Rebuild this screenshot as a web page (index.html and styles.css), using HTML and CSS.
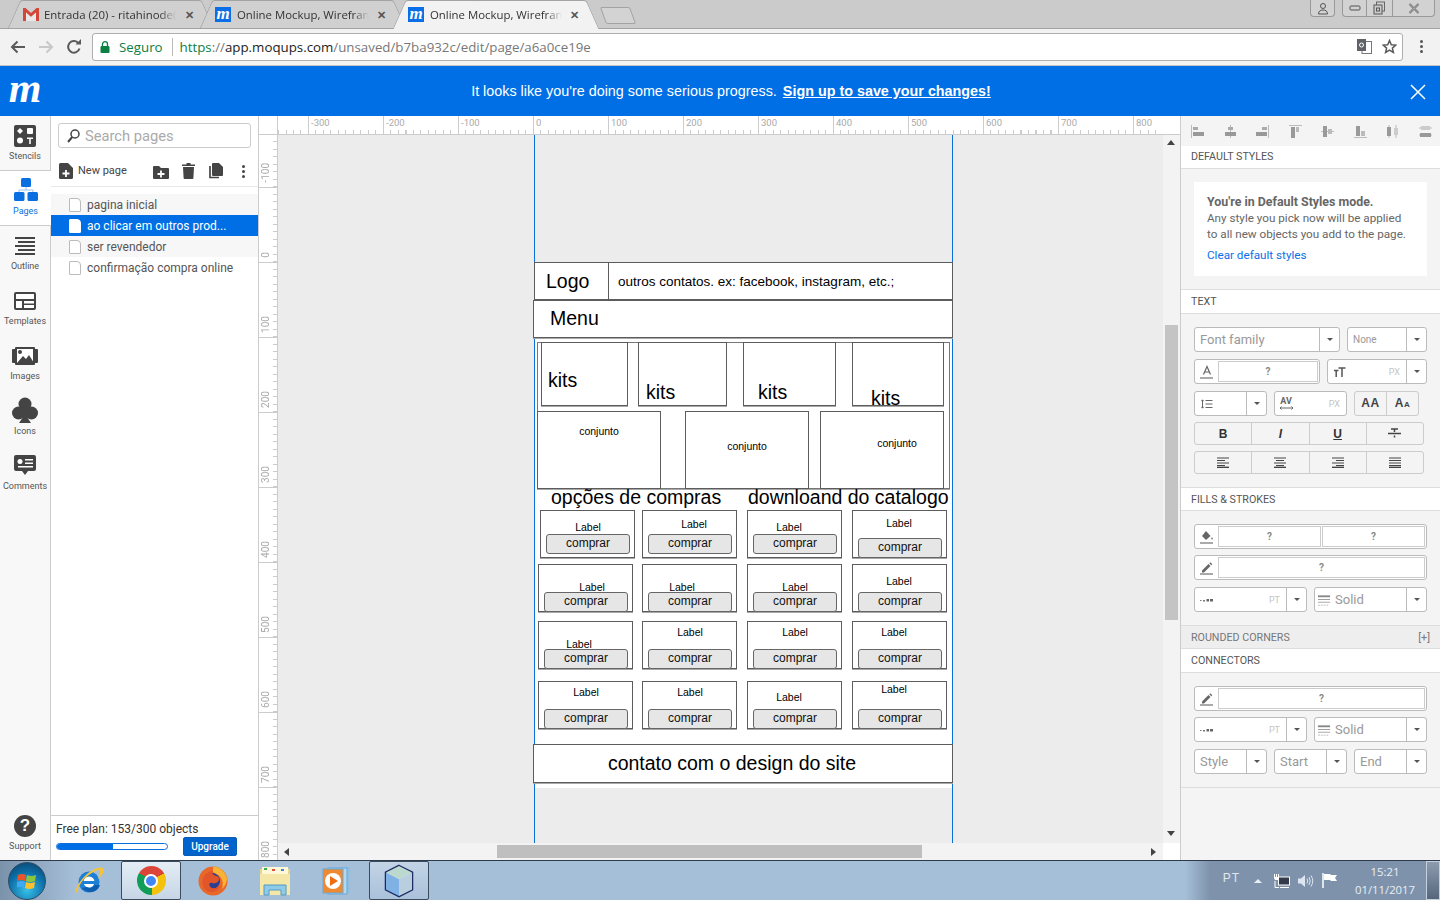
FILE: index.html
```html
<!DOCTYPE html>
<html lang="en">
<head>
    <meta charset="UTF-8">
    <title>Online Mockup, Wireframe - Moqups</title>
    <link rel="stylesheet" href="styles.css">
</head>
<body>
<svg class="defs" width="0" height="0">
    <symbol id="i-pen" viewBox="0 0 14 14"><path d="M2 9.500 8.500 3l2 2L4 11.500H2z" fill="#666"/><path d="M9.300 2.200l1-1 2 2-1 1z" fill="#666"/></symbol>
    <symbol id="i-dots" viewBox="0 0 14 6"><rect x="0" y="3" width="1.500" height="1" fill="#777"/><rect x="3" y="3" width="2" height="1.500" fill="#777"/><rect x="6.500" y="2" width="2.500" height="2.500" fill="#666"/><rect x="10" y="2" width="3" height="2.500" fill="#666"/></symbol>
    <symbol id="i-solid" viewBox="0 0 14 12"><path d="M0 1h13v2H0z" fill="#888"/><path d="M0 5h13v1H0z" fill="#999"/><path d="M0 8h13v1H0zM0 11h2v1H0zM3 11h2v1H3zM6 11h2v1H6zM9 11h2v1H9z" fill="#aaa"/></symbol>
</svg>

<div class="tabstrip">
    <div class="tab tab-first">
        <svg class="favicon" viewBox="0 0 16 14"><path d="M0 1h2.500L8 6l5.500-5H16v13h-3V5.500L8 10 3 5.500V14H0z" fill="#d44638"/><path d="M3 5.500 8 10l5-4.500V14H3z" fill="#e8e8e8"/></svg>
        <span class="tab-title">Entrada (20) - ritahinode(</span>
        <span class="tab-x">&#10005;</span>
    </div>
    <div class="tab">
        <span class="moq-fav">m</span>
        <span class="tab-title">Online Mockup, Wirefran</span>
        <span class="tab-x">&#10005;</span>
    </div>
    <div class="tab tab-active">
        <span class="moq-fav">m</span>
        <span class="tab-title">Online Mockup, Wirefran</span>
        <span class="tab-x">&#10005;</span>
    </div>
    <div class="tab-new"></div>
    <div class="win-btns">
        <div class="win-group win-user">
            <svg width="12" height="13" viewBox="0 0 12 13"><circle cx="6" cy="4" r="2.500" fill="none" stroke="#555"/><path d="M1.500 12c0-3 2-4 4.500-4s4.500 1 4.500 4z" fill="none" stroke="#555"/></svg>
        </div>
        <div class="win-group">
            <div class="win-cell w-min"><svg width="12" height="8" viewBox="0 0 12 8"><rect x="1" y="2" width="10" height="4" fill="none" stroke="#555" rx="1"/></svg></div>
            <div class="win-cell w-max"><svg width="13" height="14" viewBox="0 0 13 14"><rect x="3.500" y="1" width="8" height="9" fill="none" stroke="#666"/><rect x="1" y="4" width="8" height="9" fill="#ccc" stroke="#555"/><rect x="3.500" y="7" width="3" height="3" fill="none" stroke="#555"/></svg></div>
            <div class="win-cell w-close"><svg width="12" height="11" viewBox="0 0 12 11"><path d="M1.500 1 10.500 10M10.500 1 1.500 10" stroke="#666" stroke-width="2" fill="none"/><path d="M1.500 1 10.500 10M10.500 1 1.500 10" stroke="#ddd" stroke-width=".7" fill="none"/></svg></div>
        </div>
    </div>
</div>

<div class="toolbar">
    <svg class="nav-ico" width="16" height="14" viewBox="0 0 16 14"><path d="M15 7H2.500M7.500 1.500 2 7l5.500 5.500" fill="none" stroke="#5a5a5a" stroke-width="2"/></svg>
    <svg class="nav-ico" width="16" height="14" viewBox="0 0 16 14"><path d="M1 7h12.500M8.500 1.500 14 7l-5.500 5.500" fill="none" stroke="#c8c8c8" stroke-width="2"/></svg>
    <svg class="nav-ico" width="16" height="16" viewBox="0 0 16 16"><path d="M13.500 9.500A5.800 5.800 0 1 1 12 3.700" fill="none" stroke="#5a5a5a" stroke-width="2"/><path d="M9.500 5.500h5.500V0z" fill="#5a5a5a"/></svg>
    <div class="omnibox">
        <svg class="lock" width="10" height="12" viewBox="0 0 10 12"><rect x="0.500" y="5" width="9" height="7" rx="1" fill="#0b8043"/><path d="M2.500 5V3.200a2.500 2.500 0 0 1 5 0V5" fill="none" stroke="#0b8043" stroke-width="1.300"/></svg>
        <span class="secure">Seguro</span>
        <span class="url"><span class="u-green">https</span><span class="u-grey">://</span>app.moqups.com<span class="u-grey">/unsaved/b7ba932c/edit/page/a6a0ce19e</span></span>
        <svg class="omni-ico" width="15" height="15" viewBox="0 0 15 15"><rect x="5" y="2.500" width="9.500" height="12" fill="#fff" stroke="#777"/><rect x="0" y="0" width="9" height="12" fill="#5f6368"/><circle cx="4.500" cy="6" r="2" fill="none" stroke="#fff"/></svg>
        <svg class="omni-ico star" width="15" height="15" viewBox="0 0 15 15"><path d="M7.500 1.500 9.300 5.700l4.500.4-3.400 3 1 4.400-3.900-2.300-3.900 2.300 1-4.400-3.400-3 4.500-.4z" fill="none" stroke="#5a5a5a" stroke-width="1.500"/></svg>
    </div>
    <div class="kebab kebab-chrome"><i></i><i></i><i></i></div>
</div>

<div class="banner">
    <span class="logo">m</span>
    <p class="banner-msg">It looks like you're doing some serious progress. <a href="#">Sign up to save your changes!</a></p>
    <svg class="banner-x" width="16" height="16" viewBox="0 0 16 16"><path d="M1 1l14 14M15 1 1 15" stroke="#fff" stroke-width="1.500"/></svg>
</div>

<div class="app">
    <nav class="rail">
        <div class="rail-item rail-stencils">
            <svg width="22" height="22" viewBox="0 0 22 22"><rect width="22" height="22" rx="2" fill="#444"/><path d="M6 3l3 3-3 3-3-3z" fill="#fff"/><rect x="13" y="3" width="6" height="6" rx="1" fill="#fff"/><circle cx="6" cy="15.500" r="3" fill="#fff"/><path d="M13 12.500h6v1.500h-2.200v5h-1.600v-5H13z" fill="#fff"/></svg>
            <span>Stencils</span>
        </div>
        <div class="rail-item rail-active">
            <svg width="24" height="24" viewBox="0 0 24 24"><rect x="7" y="0" width="10" height="9" rx="1.500" fill="#0a6fe0"/><path d="M12 9v3M5 14v-2h14v2" fill="none" stroke="#9cc3ee"/><rect x="0" y="14" width="10.500" height="9" rx="1.500" fill="#0a6fe0"/><rect x="13.500" y="14" width="10.500" height="9" rx="1.500" fill="#0a6fe0"/></svg>
            <span>Pages</span>
        </div>
        <div class="rail-item item-short">
            <svg width="22" height="18" viewBox="0 0 22 18"><path d="M1 1h20M4 5h17M1 9h20M4 13h17M1 17h20" stroke="#444" stroke-width="2"/></svg>
            <span>Outline</span>
        </div>
        <div class="rail-item item-short">
            <svg width="22" height="18" viewBox="0 0 22 18"><rect width="22" height="18" rx="2" fill="#444"/><rect x="2" y="2" width="18" height="5" fill="#fff"/><rect x="2" y="9" width="6" height="7" fill="#fff"/><rect x="10" y="9" width="10" height="2.500" fill="#fff"/><rect x="10" y="13" width="10" height="3" fill="#fff"/></svg>
            <span>Templates</span>
        </div>
        <div class="rail-item item-short">
            <svg width="26" height="18" viewBox="0 0 26 18"><rect x="0" y="2" width="26" height="14" rx="1" fill="#444"/><rect x="3" y="0" width="20" height="18" rx="1" fill="#444"/><path d="M5 2h16v14H5z" fill="#fff"/><circle cx="8" cy="5" r="2" fill="#444"/><path d="M5 16l6-7 3 3 3-4 5 8z" fill="#444"/></svg>
            <span>Images</span>
        </div>
        <div class="rail-item item-tall">
            <svg width="26" height="26" viewBox="0 0 26 26"><circle cx="13" cy="7" r="6.500" fill="#444"/><circle cx="6.500" cy="16" r="6.500" fill="#444"/><circle cx="19.500" cy="16" r="6.500" fill="#444"/><path d="M11.500 10h3l.5 10 4 6H7l4-6z" fill="#444"/></svg>
            <span>Icons</span>
        </div>
        <div class="rail-item item-short">
            <svg width="22" height="20" viewBox="0 0 22 20"><path d="M2 0h18a2 2 0 0 1 2 2v12a2 2 0 0 1-2 2h-6l-3 4-3-4H2a2 2 0 0 1-2-2V2a2 2 0 0 1 2-2z" fill="#444"/><circle cx="6" cy="6.500" r="2.500" fill="#fff"/><path d="M11 4h8v1.500h-8zM11 7.500h8V9h-8zM4 11h15v1.500H4z" fill="#fff"/></svg>
            <span>Comments</span>
        </div>
        <div class="rail-item rail-support">
            <div class="help-dot">?</div>
            <span>Support</span>
        </div>
    </nav>

    <aside class="pages">
        <div class="search">
            <svg width="13" height="14" viewBox="0 0 13 14"><circle cx="8" cy="5" r="4" fill="none" stroke="#444" stroke-width="1.500"/><path d="M5.200 8 1 13" stroke="#444" stroke-width="2"/></svg>
            <span>Search pages</span>
        </div>
        <div class="pages-tools">
            <svg width="14" height="16" viewBox="0 0 14 16"><path d="M1.500 0H9l5 5v9.500a1.500 1.500 0 0 1-1.500 1.500h-11A1.500 1.500 0 0 1 0 14.500v-13A1.500 1.500 0 0 1 1.500 0z" fill="#444"/><path d="M3.500 10.500h7M7 7v7" stroke="#fff" stroke-width="1.800"/></svg>
            <span class="new-page">New page</span>
            <svg class="t-folder" width="16" height="13" viewBox="0 0 16 13"><path d="M0 1a1 1 0 0 1 1-1h5l2 2h7a1 1 0 0 1 1 1v9a1 1 0 0 1-1 1H1a1 1 0 0 1-1-1z" fill="#444"/><path d="M4.500 8h7M8 4.500v7" stroke="#fff" stroke-width="1.800"/></svg>
            <svg class="t-trash" width="13" height="16" viewBox="0 0 13 16"><path d="M0 1.500h4.500V0h4v1.500H13V3H0zM1 4h11l-.6 11a1 1 0 0 1-1 1H2.600a1 1 0 0 1-1-1z" fill="#444"/></svg>
            <svg class="t-copy" width="14" height="16" viewBox="0 0 14 16"><path d="M4 0h6l4 4v8a1 1 0 0 1-1 1H4a1 1 0 0 1-1-1V1a1 1 0 0 1 1-1z" fill="#444"/><path d="M1 3v11.500h9" fill="none" stroke="#444" stroke-width="1.700"/></svg>
            <div class="kebab kebab-pages"><i></i><i></i><i></i></div>
        </div>
        <ul class="page-list">
            <li class="alt"><span class="doc"></span>pagina inicial</li>
            <li class="sel"><span class="doc"></span>ao clicar em outros prod...</li>
            <li class="alt"><span class="doc"></span>ser revendedor</li>
            <li><span class="doc"></span>confirmação compra online</li>
        </ul>
        <div class="plan">
            <div class="plan-text">Free plan: 153/300 objects</div>
            <div class="plan-row">
                <div class="meter"><div class="meter-fill"></div></div>
                <button class="upgrade">Upgrade</button>
            </div>
        </div>
    </aside>

    <main class="workspace">
        <div class="ruler-corner"></div>
        <div class="ruler-h">
            <span>-300</span><span>-200</span><span>-100</span><span>0</span><span>100</span><span>200</span><span>300</span><span>400</span><span>500</span><span>600</span><span>700</span><span>800</span>
        </div>
        <div class="ruler-top-end"></div>
        <div class="ruler-v">
            <span class="first"><b>-100</b></span><span><b>0</b></span><span><b>100</b></span><span><b>200</b></span><span><b>300</b></span><span><b>400</b></span><span><b>500</b></span><span><b>600</b></span><span><b>700</b></span><span><b>800</b></span>
        </div>

        <div class="canvas">
            <div class="artboard">
                <div class="sheet"></div>

                <div class="wire head-box"><span class="logo-text">Logo</span><span class="head-rest">outros contatos. ex: facebook, instagram, etc.;</span></div>
                <div class="wire menu-box">Menu</div>
                <div class="wire main-box"></div>

                <div class="wire kit kit-1"><span>kits</span></div>
                <div class="wire kit kit-2"><span>kits</span></div>
                <div class="wire kit kit-3"><span>kits</span></div>
                <div class="wire kit kit-4"><span>kits</span></div>

                <div class="wire conj conj-1"><span>conjunto</span></div>
                <div class="wire conj conj-2"><span>conjunto</span></div>
                <div class="wire conj conj-3"><span>conjunto</span></div>

                <div class="big-title title-a">opções de compras</div>
                <div class="big-title title-b">downloand do catalogo</div>

                <div class="wire card row-1 c1 first"><span class="lb x48 y17">Label</span><span class="buy high">comprar</span></div>
                <div class="wire card row-1 c2"><span class="lb x52 y14">Label</span><span class="buy high">comprar</span></div>
                <div class="wire card row-1 c3"><span class="lb x42 y17">Label</span><span class="buy high">comprar</span></div>
                <div class="wire card row-1 c4"><span class="lb x47 y13">Label</span><span class="buy">comprar</span></div>

                <div class="wire card row-2 c1"><span class="lb x54 y23">Label</span><span class="buy">comprar</span></div>
                <div class="wire card row-2 c2"><span class="lb x40 y23">Label</span><span class="buy">comprar</span></div>
                <div class="wire card row-2 c3"><span class="lb x48 y23">Label</span><span class="buy">comprar</span></div>
                <div class="wire card row-2 c4"><span class="lb x47 y17">Label</span><span class="buy">comprar</span></div>

                <div class="wire card row-3 c1"><span class="lb x41 y23">Label</span><span class="buy">comprar</span></div>
                <div class="wire card row-3 c2"><span class="lb x48 y11">Label</span><span class="buy">comprar</span></div>
                <div class="wire card row-3 c3"><span class="lb x48 y11">Label</span><span class="buy">comprar</span></div>
                <div class="wire card row-3 c4"><span class="lb x42 y11">Label</span><span class="buy">comprar</span></div>

                <div class="wire card row-4 c1"><span class="lb x48 y11">Label</span><span class="buy">comprar</span></div>
                <div class="wire card row-4 c2"><span class="lb x48 y11">Label</span><span class="buy">comprar</span></div>
                <div class="wire card row-4 c3"><span class="lb x42 y16">Label</span><span class="buy">comprar</span></div>
                <div class="wire card row-4 c4"><span class="lb x42 y8">Label</span><span class="buy">comprar</span></div>

                <div class="wire foot-box">contato com o design do site</div>
            </div>
        </div>

        <div class="scroll-v"><i class="arrow up"></i><div class="thumb-v"></div><i class="arrow down"></i></div>
        <div class="scroll-h"><i class="arrow left"></i><div class="thumb-h"></div><i class="arrow right"></i></div>
        <div class="scroll-corner"></div>
    </main>

    <aside class="props">
        <div class="align-bar">
            <svg width="13" height="13" viewBox="0 0 13 13"><path d="M.5 0v13" stroke="#bbb"/><rect x="2" y="2" width="5" height="3" fill="#aaa"/><rect x="2" y="7" width="11" height="4" fill="#999"/></svg>
            <svg width="13" height="13" viewBox="0 0 13 13"><path d="M6.500 0v13" stroke="#bbb"/><rect x="4" y="2" width="5" height="3" fill="#aaa"/><rect x="1" y="7" width="11" height="4" fill="#999"/></svg>
            <svg width="13" height="13" viewBox="0 0 13 13"><path d="M12.500 0v13" stroke="#bbb"/><rect x="6" y="2" width="5" height="3" fill="#aaa"/><rect x="0" y="7" width="11" height="4" fill="#999"/></svg>
            <svg width="13" height="13" viewBox="0 0 13 13"><path d="M0 .5h13" stroke="#bbb"/><rect x="2" y="2" width="4" height="11" fill="#999"/><rect x="7" y="2" width="3" height="5" fill="#bbb"/></svg>
            <svg width="13" height="13" viewBox="0 0 13 13"><path d="M0 6.500h13" stroke="#bbb"/><rect x="2" y="1" width="4" height="11" fill="#999"/><rect x="7" y="4" width="4" height="5" fill="#bbb"/></svg>
            <svg width="13" height="13" viewBox="0 0 13 13"><path d="M0 12.500h13" stroke="#bbb"/><rect x="2" y="1" width="4" height="10" fill="#999"/><rect x="7" y="6" width="4" height="5" fill="#bbb"/></svg>
            <svg width="13" height="13" viewBox="0 0 13 13"><path d="M3 0v13M10 0v13" stroke="#bbb"/><rect x="1" y="2" width="4" height="9" fill="#999"/><rect x="8" y="3" width="4" height="7" fill="#ccc"/></svg>
            <svg width="13" height="13" viewBox="0 0 13 13"><path d="M0 3h13M0 10h13" stroke="#bbb"/><rect x="2" y="1" width="9" height="4" fill="#ccc"/><rect x="1" y="8" width="11" height="4" fill="#999"/></svg>
        </div>

        <div class="sec-head head-first">Default styles</div>
        <div class="sec-body body-default">
            <div class="note">
                <strong>You're in Default Styles mode.</strong>
                <p>Any style you pick now will be applied<br>to all new objects you add to the page.</p>
                <a href="#">Clear default styles</a>
            </div>
        </div>

        <div class="sec-head head-tall">Text</div>
        <div class="sec-body body-text">
            <div class="row">
                <div class="ctl w146"><span class="ph">Font family</span><span class="car"><i></i></span></div>
                <div class="ctl w80"><span class="ph small">None</span><span class="car"><i></i></span></div>
            </div>
            <div class="row">
                <div class="ctl w126">
                    <span class="lead"><svg width="14" height="14" viewBox="0 0 14 14"><path d="M3.500 9.500 7 1.500l3.500 8M5 7h4" fill="none" stroke="#666" stroke-width="1.200"/><rect x="0" y="12" width="13" height="2" fill="#aaa"/></svg></span>
                    <span class="swatch">?</span>
                </div>
                <div class="ctl w100">
                    <span class="lead"><svg width="12" height="10" viewBox="0 0 12 10"><path d="M0 3.500h4.500M2.200 3.500V10M4.500 1h7M8 1v9" fill="none" stroke="#555" stroke-width="1.500"/></svg></span>
                    <span class="unit">PX</span><span class="car"><i></i></span>
                </div>
            </div>
            <div class="row gap-tight">
                <div class="ctl w73">
                    <span class="lead"><svg width="12" height="10" viewBox="0 0 12 10"><path d="M1.500 1v8M.3 2.200 1.500 .8l1.200 1.400M.3 7.800 1.500 9.200l1.200-1.400M4.500 1.500h7M4.500 5h7M4.500 8.500h7" fill="none" stroke="#666"/></svg></span>
                    <span class="grow"></span><span class="car"><i></i></span>
                </div>
                <div class="ctl w73">
                    <span class="lead av"><b>AV</b><svg width="13" height="4" viewBox="0 0 13 4"><path d="M0 2h13M1.500.5 0 2l1.500 1.500M11.500.5 13 2l-1.500 1.500" fill="none" stroke="#666"/></svg></span>
                    <span class="unit">PX</span>
                </div>
                <div class="seg w65"><span class="seg-aa">AA</span><span class="seg-aa small-a">A<small>A</small></span></div>
            </div>
            <div class="row gap-tight">
                <div class="seg seg-low w230">
                    <span class="fmt b">B</span><span class="fmt i">I</span><span class="fmt u">U</span>
                    <span class="fmt"><svg width="13" height="11" viewBox="0 0 13 11"><path d="M0 5.500h13M3 1h7M6.500 1v3M6.500 7.500v2" fill="none" stroke="#444" stroke-width="1.500"/></svg></span>
                </div>
            </div>
            <div class="row gap-tight">
                <div class="seg seg-low w230">
                    <span class="fmt"><svg width="12" height="11" viewBox="0 0 12 11"><path d="M0 1h12M0 3.500h8M0 6h12M0 8.500h8" stroke="#444"/><path d="M0 10.300h12" stroke="#444" stroke-width="1.400"/></svg></span>
                    <span class="fmt"><svg width="12" height="11" viewBox="0 0 12 11"><path d="M0 1h12M2 3.500h8M0 6h12M2 8.500h8" stroke="#444"/><path d="M0 10.300h12" stroke="#444" stroke-width="1.400"/></svg></span>
                    <span class="fmt"><svg width="12" height="11" viewBox="0 0 12 11"><path d="M0 1h12M4 3.500h8M0 6h12M4 8.500h8" stroke="#444"/><path d="M0 10.300h12" stroke="#444" stroke-width="1.400"/></svg></span>
                    <span class="fmt"><svg width="12" height="11" viewBox="0 0 12 11"><path d="M0 1h12M0 3.500h12M0 6h12M0 8.500h12" stroke="#444"/><path d="M0 10.300h12" stroke="#444" stroke-width="1.400"/></svg></span>
                </div>
            </div>
        </div>

        <div class="sec-head">Fills &amp; strokes</div>
        <div class="sec-body body-fills">
            <div class="row gap-tight">
                <div class="ctl w233">
                    <span class="lead"><svg width="14" height="14" viewBox="0 0 14 14"><path d="M6 1 10.500 6 6 10 2 6z" fill="#666"/><path d="M12 7c1 1.500 1 2.500 0 2.500S11 8.500 12 7z" fill="#666"/><rect x="0" y="12" width="13" height="2" fill="#aaa"/></svg></span>
                    <span class="swatch">?</span><span class="swatch">?</span>
                </div>
            </div>
            <div class="row">
                <div class="ctl w233">
                    <span class="lead"><svg width="14" height="14"><use href="#i-pen"/><rect x="0" y="12" width="13" height="2" fill="#aaa"/></svg></span>
                    <span class="swatch">?</span>
                </div>
            </div>
            <div class="row">
                <div class="ctl w113">
                    <span class="lead"><svg width="14" height="6"><use href="#i-dots"/></svg></span>
                    <span class="unit">PT</span><span class="car"><i></i></span>
                </div>
                <div class="ctl w113">
                    <span class="lead lead-solid"><svg width="13" height="12"><use href="#i-solid"/></svg></span>
                    <span class="ph solid">Solid</span><span class="car"><i></i></span>
                </div>
            </div>
        </div>

        <div class="sec-head sec-grey">Rounded corners<span class="plus">[+]</span></div>

        <div class="sec-head head-tall">Connectors</div>
        <div class="sec-body body-fills">
            <div class="row gap-tight">
                <div class="ctl w233">
                    <span class="lead"><svg width="14" height="14"><use href="#i-pen"/><rect x="0" y="12" width="13" height="2" fill="#aaa"/></svg></span>
                    <span class="swatch">?</span>
                </div>
            </div>
            <div class="row">
                <div class="ctl w113">
                    <span class="lead"><svg width="14" height="6"><use href="#i-dots"/></svg></span>
                    <span class="unit">PT</span><span class="car"><i></i></span>
                </div>
                <div class="ctl w113">
                    <span class="lead lead-solid"><svg width="13" height="12"><use href="#i-solid"/></svg></span>
                    <span class="ph solid">Solid</span><span class="car"><i></i></span>
                </div>
            </div>
            <div class="row">
                <div class="ctl w73"><span class="ph">Style</span><span class="car"><i></i></span></div>
                <div class="ctl w73"><span class="ph">Start</span><span class="car"><i></i></span></div>
                <div class="ctl w73"><span class="ph">End</span><span class="car"><i></i></span></div>
            </div>
        </div>
    </aside>
</div>

<footer class="taskbar">
    <div class="orb">
        <svg width="20" height="18" viewBox="0 0 20 18"><path d="M1 3q4-2 8 0l-1 6q-4-2-8 0z" fill="#e8562a"/><path d="M10 3q4 2 9 0l-1 6q-5 2-9 0z" fill="#8cc63f"/><path d="M0 10q4-2 8 0l-1 6q-4-2-8 0z" fill="#3fa9f5"/><path d="M9 10q4 2 9 0l-1 6q-5 2-9 0z" fill="#fbc02d"/></svg>
    </div>
    <div class="task task-ie">
        <svg width="32" height="32" viewBox="0 0 32 32"><circle cx="16" cy="17" r="10.500" fill="#1d7fd6"/><circle cx="16" cy="17" r="5.500" fill="#fff"/><rect x="9" y="16" width="15" height="3" fill="#1d7fd6"/><path d="M22 20h5q-2 6-8 7-6 .5-10-4l5-1q4 3 8-2z" fill="#0e5fb0"/><path d="M5 27C0 30 3 21 10 13S27 1 30 3s-2 9-5 11c2-5 3-9 1-9S14 9 8 18c-3 5-4 8-3 9z" fill="#f3c33b"/></svg>
    </div>
    <div class="task task-on">
        <div class="chrome-ico"><div class="chrome-blue"></div></div>
    </div>
    <div class="task">
        <svg width="32" height="32" viewBox="0 0 32 32"><circle cx="16" cy="16" r="14.500" fill="#e8682a"/><path d="M16 1.500A14.500 14.500 0 0 1 30 14c-1 6-3 8-5 10 2-6 0-12-4-14l-5-3z" fill="#f9b233"/><circle cx="15" cy="16" r="8" fill="#2a3f8f"/><path d="M6 14c1-5 6-8 10-8-1 2-1 3 1 4s5 1 5 4-3 5-7 4-3 4 0 5c3 1 7-1 9-3-2 5-6 7-10 7C8 27 4 21 6 14z" fill="#e2542a"/></svg>
    </div>
    <div class="task task-folder">
        <svg width="32" height="30" viewBox="0 0 32 30"><path d="M1 3h30v26H1z" fill="#e9d68a"/><path d="M3 1h26v8H3z" fill="#fff8d8"/><rect x="5" y="2" width="3" height="2" fill="#3fae49"/><rect x="13" y="3" width="3" height="2" fill="#d9503f"/><rect x="22" y="3" width="3" height="2" fill="#3f83d9"/><path d="M1 8h30v21H1z" fill="#f5e7a8"/><path d="M5 29V19h22v10h-5v-5H10v5z" fill="#8fcbe8" stroke="#4f9cc4"/></svg>
    </div>
    <div class="task task-media">
        <svg width="32" height="30" viewBox="0 0 32 30"><rect x="10" y="1" width="18" height="26" fill="#8dc1e6"/><rect x="6" y="2" width="19" height="26" fill="#b4d8ef" stroke="#6ba7d1"/><rect x="1" y="3" width="20" height="24" fill="#f08a32" stroke="#6ba7d1"/><circle cx="11" cy="15" r="8" fill="#fff"/><path d="M8 10l8 5-8 5z" fill="#ef6c13"/></svg>
    </div>
    <div class="task task-on task-vbox">
        <svg width="32" height="34" viewBox="0 0 32 34"><path d="M16 2 29 8.500v17L16 32 3 25.500v-17z" fill="#dfeaf3" stroke="#1f2a63" stroke-width="2.500"/><path d="M16 15 29 8.500v17L16 32z" fill="#b9cfe0"/><path d="M16 15 3 8.500v17L16 32z" fill="#7fb1e4"/><path d="M16 2 29 8.500 16 15 3 8.500z" fill="#bcd9cf"/></svg>
    </div>
    <div class="tray">
        <span class="lang">PT</span>
        <i class="tray-up"></i>
        <svg width="16" height="15" viewBox="0 0 16 15"><rect x="4.500" y="4" width="11" height="8" fill="#333b4a" stroke="#fff"/><path d="M6 14.500h9M1 8v6.500h4" stroke="#fff" fill="none"/><path d="M0 1h1v3h1V1h1v3h1V1h1v4l-1 2H1L0 5z" fill="#fff"/></svg>
        <svg width="16" height="14" viewBox="0 0 16 14"><path d="M0 4.500h3L7 1v12L3 9.500H0z" fill="#dde6f0"/><path d="M9 4.500q1.500 2.500 0 5M11 3q2.500 4 0 8M13 1.500q3.500 5.500 0 11" fill="none" stroke="#dde6f0"/></svg>
        <svg width="16" height="15" viewBox="0 0 16 15"><path d="M1 0v15" stroke="#fff" stroke-width="1.500"/><path d="M2 1h6l1 1h6l-2 3 2 3H9L8 7H2z" fill="#fff"/></svg>
        <div class="clock"><div>15:21</div><div>01/11/2017</div></div>
        <div class="show-desktop"></div>
    </div>
</footer>
</body>
</html>
```

FILE: styles.css
```css
* {
    box-sizing: border-box;
}
html, body {
    margin: 0;
    height: 900px;
    overflow: hidden;
}
body {
    width: 1440px;
    display: flex;
    flex-direction: column;
    font-family: Roboto, "Liberation Sans", sans-serif;
    color: #555;
    background: #fff;
}
.defs {
    position: absolute;
}

/* browser chrome */
.tabstrip {
    height: 29px;
    flex: none;
    display: flex;
    background: #cbcbcb;
    border-bottom: 1px solid #a3a3a3;
    padding-left: 14px;
    font-family: "Open Sans", "Noto Sans", sans-serif;
}
.tab {
    position: relative;
    width: 194px;
    height: 28px;
    margin-right: -2px;
    display: flex;
    align-items: center;
    padding: 0 0 0 9px;
    font-size: 11.4px;
    color: #333;
    z-index: 1;
}
.tab::before, .tab::after {
    content: "";
    position: absolute;
    top: 0;
    bottom: 0;
    width: 55%;
    background: #d0d0d0;
    border-top: 1px solid #a3a3a3;
    z-index: -1;
}
.tab::before {
    left: 0;
    border-left: 1px solid #a3a3a3;
    border-radius: 3px 0 0 0;
    transform: skewX(-24deg);
}
.tab::after {
    right: 0;
    border-right: 1px solid #a3a3a3;
    border-radius: 0 3px 0 0;
    transform: skewX(24deg);
}
.tab-active {
    z-index: 2;
    height: 29px;
    margin-left: 1px;
}
.tab-active::before, .tab-active::after {
    background: #f2f2f2;
}
.favicon {
    width: 16px;
    height: 14px;
    flex: none;
}
.moq-fav {
    width: 16px;
    height: 15px;
    flex: none;
    background: #0a6fe6;
    color: #fff;
    font: italic bold 17px/14px "Liberation Serif", serif;
    text-align: center;
}
.tab-title {
    flex: none;
    margin-left: 6px;
    width: 132px;
    white-space: nowrap;
    -webkit-mask-image: linear-gradient(to right, #000 88%, transparent);
    mask-image: linear-gradient(to right, #000 88%, transparent);
}
.tab-first .tab-title {
    margin-left: 5px;
}
.tab-x {
    margin-left: 8px;
    font-size: 11px;
    color: #555;
    font-weight: bold;
}
.tab-first .tab-x {
    margin-left: 9px;
}
.tab-new {
    width: 30px;
    height: 17px;
    margin: 7px 0 0 12px;
    background: #d3d3d3;
    border: 1px solid #a3a3a3;
    border-radius: 2px;
    transform: skewX(20deg);
}
.win-btns {
    margin-left: auto;
    margin-right: 5px;
    display: flex;
    gap: 7px;
    height: 17px;
}
.win-group {
    display: flex;
    border: 1px solid #999;
    border-top: none;
    border-radius: 0 0 4px 4px;
    background: #d2d2d2;
}
.win-user {
    width: 25px;
    justify-content: center;
    align-items: center;
}
.win-cell {
    display: flex;
    align-items: center;
    justify-content: center;
    border-right: 1px solid #999;
}
.w-min {
    width: 24px;
}
.w-max {
    width: 26px;
}
.w-close {
    width: 41px;
    border-right: none;
}
.toolbar {
    height: 37px;
    flex: none;
    display: flex;
    align-items: center;
    padding: 0 0 1px 10px;
    background: #f2f2f2;
    border-bottom: 1px solid #c4c4c4;
}
.nav-ico {
    margin-right: 12px;
}
.nav-ico:nth-of-type(3) {
    margin-right: 11px;
}
.omnibox {
    width: 1311px;
    height: 28px;
    display: flex;
    align-items: center;
    padding-left: 7px;
    margin-left: -1px;
    background: #fff;
    border: 1px solid #aeaeae;
    border-radius: 3px;
    font-family: "Open Sans", "Noto Sans", sans-serif;
    font-size: 13.3px;
    color: #222;
}
.secure {
    margin-left: 9px;
    padding-right: 9px;
    border-right: 1px solid #bbb;
    color: #0b8043;
    line-height: 18px;
}
.url {
    margin-left: 7px;
}
.u-green {
    color: #0b8043;
}
.u-grey {
    color: #777;
}
.omni-ico {
    margin-left: auto;
    margin-right: 5px;
}
.star {
    margin-left: 5px;
    margin-right: 5px;
}
.kebab {
    display: flex;
    flex-direction: column;
    gap: 2px;
    width: 3px;
}
.kebab i {
    width: 3px;
    height: 3px;
    border-radius: 50%;
    background: #555;
}
.kebab-chrome {
    margin-left: 17px;
}

/* moqups top banner */
.banner {
    height: 50px;
    flex: none;
    display: flex;
    align-items: center;
    background: #006fe6;
    color: #fff;
}
.logo {
    width: 50px;
    text-align: center;
    font: italic bold 42px/44px "Liberation Serif", serif;
    margin-top: -7px;
}
.banner-msg {
    flex: 1;
    margin: 0;
    padding-left: 2px;
    text-align: center;
    font-family: "Liberation Sans", sans-serif;
    font-size: 14.35px;
}
.banner-msg a {
    color: #fff;
    font-weight: bold;
    margin-left: 2px;
}
.banner-x {
    margin: 2px 14px 0 0;
}

/* app shell */
.app {
    flex: 1;
    display: flex;
    min-height: 0;
}
.rail {
    width: 51px;
    flex: none;
    display: flex;
    flex-direction: column;
    background: #f8f8f8;
    border-right: 1px solid #ccc;
}
.rail-item {
    height: 55px;
    flex: none;
    display: flex;
    flex-direction: column;
    align-items: center;
    justify-content: flex-end;
    gap: 3px;
    padding-bottom: 9px;
    font-size: 9px;
    color: #555;
}
.rail-item span {
    line-height: 12px;
}
.item-short {
    gap: 5px;
}
.item-tall {
    gap: 2px;
}
.rail-stencils {
    border-bottom: 1px solid #ccc;
    padding-bottom: 8px;
}
.rail-active {
    background: #fff;
    color: #0a6fe0;
    width: 51px;
    margin-right: -1px;
    border-bottom: 1px solid #ccc;
    padding-bottom: 8px;
    position: relative;
}
.rail-support {
    margin-top: auto;
    padding-bottom: 8px;
}
.help-dot {
    width: 22px;
    height: 22px;
    border-radius: 50%;
    background: #444;
    color: #fff;
    text-align: center;
    font: bold 17px/22px "Liberation Sans", sans-serif;
}

/* pages panel */
.pages {
    width: 208px;
    flex: none;
    display: flex;
    flex-direction: column;
    border-right: 1px solid #ccc;
    background: #fff;
}
.search {
    height: 25px;
    margin: 7px 7px 0;
    display: flex;
    align-items: center;
    padding-left: 8px;
    border: 1px solid #ccc;
    border-radius: 3px;
    font-size: 14.7px;
    color: #aaa;
}
.search span {
    margin-left: 5px;
}
.pages-tools {
    height: 39px;
    display: flex;
    align-items: center;
    padding: 8px 0 0 8px;
    border-bottom: 1px solid #e8e8e8;
}
.new-page {
    margin: -2px 0 0 5px;
    font-size: 11px;
    color: #444;
    width: 62px;
}
.t-folder {
    margin: 2px 0 0 13px;
}
.t-trash {
    margin-left: 13px;
}
.t-copy {
    margin-left: 14px;
}
.kebab-pages {
    margin: 0 0 0 19px;
}
.kebab-pages i {
    background: #444;
}
.page-list {
    list-style: none;
    margin: 7px 0 0;
    padding: 0;
    font-size: 12px;
    color: #555;
}
.page-list li {
    height: 21px;
    display: flex;
    align-items: center;
    padding-left: 18px;
}
.page-list .alt {
    background: #f7f7f7;
}
.page-list .sel {
    background: #006fe6;
    color: #fff;
}
.doc {
    width: 12px;
    height: 14px;
    margin-right: 6px;
    background: #fff;
    border: 1px solid #bbb;
    border-radius: 1px 4px 1px 1px;
}
.sel .doc {
    border-color: #fff;
}
.plan {
    margin-top: auto;
    height: 45px;
    border-top: 1px solid #ccc;
    padding: 6px 0 0 5px;
}
.plan-text {
    font-size: 12px;
    color: #333;
    line-height: 14px;
}
.plan-row {
    display: flex;
    align-items: center;
    margin-top: 1px;
}
.meter {
    width: 112px;
    height: 7px;
    border: 1px solid #0a6fe0;
    border-radius: 4px;
    overflow: hidden;
    background: #fff;
}
.meter-fill {
    width: 51%;
    height: 100%;
    background: #006fe6;
}
.upgrade {
    width: 54px;
    height: 19px;
    margin-left: 15px;
    padding: 0;
    background: #0064cc;
    border: 1px solid #0a5cb5;
    border-radius: 2px;
    color: #fff;
    font: 500 10px Roboto, sans-serif;
}

/* rulers + canvas */
.workspace {
    width: 921px;
    flex: none;
    display: grid;
    grid-template-columns: 19px 885px 17px;
    grid-template-rows: 19px 708px 17px;
    background: #fff;
}
.ruler-corner {
    border-right: 1px solid #ccc;
    border-bottom: 1px solid #ccc;
}
.ruler-top-end {
    border-bottom: 1px solid #ccc;
}
.ruler-h {
    display: flex;
    padding-left: 30px;
    overflow: hidden;
    border-bottom: 1px solid #ccc;
    background: repeating-linear-gradient(to right, #ccc 0, #ccc 1px, transparent 1px, transparent 7.5px) left bottom / 100% 4px no-repeat;
}
.ruler-h span {
    flex: none;
    width: 75px;
    height: 18px;
    padding-left: 2px;
    border-left: 1px solid #ccc;
    font-size: 9.5px;
    line-height: 14px;
    color: #aaa;
}
.ruler-v {
    border-right: 1px solid #ccc;
    overflow: hidden;
    grid-row: 2 / 4;
    grid-column: 1;
    background: repeating-linear-gradient(to bottom, transparent 0, transparent 6.5px, #ccc 6.5px, #ccc 7.5px) right top / 4px 100% no-repeat;
}
.ruler-v span {
    display: flex;
    align-items: flex-end;
    height: 75px;
    padding: 0 0 4px 1px;
    border-bottom: 1px solid #ccc;
}
.ruler-v span.first {
    height: 53px;
}
.ruler-v b {
    writing-mode: vertical-rl;
    transform: rotate(180deg);
    font-size: 10px;
    font-weight: normal;
    line-height: 11px;
    color: #aaa;
}
.canvas {
    position: relative;
    overflow: hidden;
    background: #ececec;
    grid-row: 2;
    grid-column: 2;
}
.artboard {
    position: absolute;
    left: 256px;
    top: 0;
    bottom: 0;
    width: 419px;
    border-left: 1px solid #0a6fd8;
    border-right: 1px solid #0a6fd8;
    font-family: "Liberation Sans", sans-serif;
    color: #000;
}
.sheet {
    position: absolute;
    left: 0;
    right: 0;
    top: 127px;
    height: 526px;
    background: #fff;
}
.wire {
    position: absolute;
    background: #fff;
    border: 1px solid #5c5c5c;
    box-shadow: 0 1px 0 #a8a8a8;
}
.head-box {
    left: -1px;
    top: 127px;
    width: 419px;
    height: 38px;
    display: flex;
    align-items: center;
}
.logo-text {
    width: 74px;
    height: 100%;
    padding-left: 11px;
    border-right: 1px solid #5c5c5c;
    font-size: 19.5px;
    line-height: 36px;
}
.head-rest {
    margin-left: 9px;
    font-size: 13.5px;
}
.menu-box {
    left: -2px;
    top: 165px;
    width: 420px;
    height: 38px;
    padding-left: 16px;
    font-size: 19.5px;
    line-height: 35px;
}
.main-box {
    left: 2px;
    top: 207px;
    width: 413px;
    height: 147px;
    border-color: #777;
}
.kit {
    top: 207px;
    height: 64px;
    font-size: 19.5px;
    line-height: 22px;
}
.kit span {
    position: absolute;
}
.kit-1 {
    left: 6px;
    width: 87px;
}
.kit-1 span {
    left: 6px;
    top: 26px;
}
.kit-2 {
    left: 103px;
    width: 89px;
}
.kit-2 span {
    left: 7px;
    top: 38px;
}
.kit-3 {
    left: 208px;
    width: 93px;
}
.kit-3 span {
    left: 14px;
    top: 38px;
}
.kit-4 {
    left: 317px;
    width: 92px;
}
.kit-4 span {
    left: 18px;
    top: 44px;
}
.conj {
    top: 276px;
    height: 78px;
    font-size: 10.5px;
    line-height: 12px;
}
.conj span {
    position: absolute;
    left: 0;
    right: 0;
    text-align: center;
}
.conj-1 {
    left: 2px;
    width: 124px;
}
.conj-1 span {
    top: 13px;
}
.conj-2 {
    left: 150px;
    width: 124px;
}
.conj-2 span {
    top: 28px;
}
.conj-3 {
    left: 285px;
    width: 124px;
}
.conj-3 span {
    top: 25px;
    left: 30px;
}
.big-title {
    position: absolute;
    top: 351px;
    font-size: 19.5px;
    line-height: 23px;
    white-space: nowrap;
}
.title-a {
    left: 16px;
}
.title-b {
    left: 213px;
}
.card {
    width: 95px;
    height: 48px;
}
.row-1 { top: 375px; }
.row-2 { top: 429px; }
.row-3 { top: 486px; }
.row-4 { top: 546px; }
.c1 { left: 3px; }
.c2 { left: 107px; }
.c3 { left: 212px; }
.c4 { left: 317px; }
.c1.first { left: 5px; }
.buy {
    position: absolute;
    left: 5px;
    top: 27px;
    width: 84px;
    height: 20px;
    background: #e6e6e6;
    border: 1px solid #666;
    border-radius: 3px;
    text-align: center;
    font-size: 12px;
    line-height: 16px;
    color: #111;
}
.buy.high {
    top: 23px;
}
.lb {
    position: absolute;
    width: 40px;
    text-align: center;
    font-size: 10.5px;
    line-height: 12px;
}
.x40 { left: 19px; }
.x41 { left: 20px; }
.x42 { left: 21px; }
.x47 { left: 26px; }
.x48 { left: 27px; }
.x52 { left: 31px; }
.x54 { left: 33px; }
.y8 { top: 1px; }
.y11 { top: 4px; }
.y13 { top: 6px; }
.y14 { top: 7px; }
.y16 { top: 9px; }
.y17 { top: 10px; }
.y23 { top: 16px; }
.foot-box {
    left: -2px;
    top: 609px;
    width: 420px;
    height: 39px;
    padding-right: 22px;
    text-align: center;
    font-size: 19.5px;
    line-height: 36px;
}

/* scrollbars */
.scroll-v {
    position: relative;
    background: #f3f3f3;
    grid-row: 2;
    grid-column: 3;
}
.scroll-h {
    position: relative;
    background: #f3f3f3;
    grid-row: 3;
    grid-column: 2;
}
.scroll-corner {
    background: #fff;
    grid-row: 3;
    grid-column: 3;
}
.thumb-v {
    position: absolute;
    left: 2px;
    top: 190px;
    width: 13px;
    height: 295px;
    background: #c4c4c4;
}
.thumb-h {
    position: absolute;
    left: 219px;
    top: 2px;
    width: 425px;
    height: 13px;
    background: #bfbfbf;
}
.arrow {
    position: absolute;
    width: 0;
    height: 0;
    border: 4px solid transparent;
}
.arrow.up {
    left: 4px;
    top: 5px;
    border-top: 0;
    border-bottom: 5px solid #444;
}
.arrow.down {
    left: 4px;
    bottom: 7px;
    border-bottom: 0;
    border-top: 5px solid #444;
}
.arrow.left {
    left: 6px;
    top: 5px;
    border-left: 0;
    border-right: 5px solid #444;
}
.arrow.right {
    right: 7px;
    top: 5px;
    border-right: 0;
    border-left: 5px solid #444;
}

/* properties panel */
.props {
    flex: 1;
    background: #f4f4f4;
    border-left: 1px solid #ccc;
    font-size: 11.7px;
    color: #666;
}
.align-bar {
    height: 30px;
    display: flex;
    align-items: center;
    gap: 19.5px;
    padding-left: 10px;
}
.sec-head {
    height: 23px;
    padding-left: 10px;
    background: #fff;
    border-bottom: 1px solid #ddd;
    font-size: 10.7px;
    line-height: 23px;
    text-transform: uppercase;
    color: #555;
}
.head-first {
    line-height: 21px;
}
.head-tall {
    height: 24px;
    line-height: 24px;
}
.sec-grey {
    display: flex;
    justify-content: space-between;
    padding-right: 10px;
    background: #eee;
    color: #777;
}
.plus {
    color: #777;
}
.sec-body {
    padding: 13px 13px 0;
    border-bottom: 1px solid #ddd;
}
.body-default {
    height: 121px;
}
.body-text {
    height: 174px;
}
.body-fills {
    height: 115px;
}
.note {
    width: 233px;
    height: 94px;
    padding: 12px 13px;
    background: #fff;
    line-height: 16px;
}
.note strong {
    display: block;
    font-size: 12.4px;
}
.note p {
    margin: 0;
}
.note a {
    display: block;
    margin-top: 5px;
    color: #0a6fe8;
    text-decoration: none;
}
.row {
    display: flex;
    gap: 7px;
    margin-bottom: 7px;
}
.gap-tight {
    margin-bottom: 6px;
}
.ctl {
    height: 25px;
    display: flex;
    align-items: center;
    background: #fff;
    border: 1px solid #bbb;
    border-radius: 3px;
    color: #999;
}
.w65 { width: 65px; }
.w73 { width: 73px; }
.w80 { width: 80px; }
.w100 { width: 100px; }
.w113 { width: 113px; }
.w126 { width: 126px; }
.w146 { width: 146px; }
.w230 { width: 230px; }
.w233 { width: 233px; }
.ph {
    flex: 1;
    padding-left: 5px;
    font-size: 13px;
    color: #999;
}
.ph.small {
    font-size: 10px;
}
.ph.solid {
    padding-left: 2px;
}
.car {
    width: 20px;
    height: 100%;
    flex: none;
    display: flex;
    align-items: center;
    justify-content: center;
    border-left: 1px solid #bbb;
}
.car i {
    width: 0;
    height: 0;
    border: 3px solid transparent;
    border-bottom: 0;
    border-top: 3px solid #555;
}
.lead {
    width: 23px;
    flex: none;
    display: flex;
    justify-content: center;
}
.lead-solid {
    width: 18px;
}
.av {
    flex-direction: column;
    align-items: center;
    width: 22px;
}
.av b {
    font-size: 9px;
    line-height: 9px;
    color: #666;
}
.swatch {
    flex: 1;
    height: 21px;
    margin-right: 1px;
    border: 1px solid #ccc;
    background: #fff;
    text-align: center;
    font-size: 10px;
    font-weight: bold;
    line-height: 19px;
    color: #888;
}
.unit {
    flex: 1;
    padding-right: 6px;
    text-align: right;
    font-size: 9px;
    color: #c4c4c4;
}
.grow {
    flex: 1;
}
.seg {
    height: 25px;
    display: flex;
    border: 1px solid #ccc;
    border-radius: 3px;
}
.seg-low {
    height: 23px;
}
.seg-aa {
    flex: 1;
    text-align: center;
    font: bold 12px/22px "Liberation Sans", sans-serif;
    color: #444;
    letter-spacing: .5px;
}
.seg-aa small {
    font-size: 8px;
}
.seg-aa + .seg-aa {
    border-left: 1px solid #ccc;
}
.fmt {
    flex: 1;
    display: flex;
    align-items: center;
    justify-content: center;
    border-left: 1px solid #ccc;
    font: bold 12px "Liberation Sans", sans-serif;
    color: #333;
}
.fmt:first-child {
    border-left: none;
}
.fmt.i {
    font-style: italic;
}
.fmt.u {
    text-decoration: underline;
}

/* windows taskbar */
.taskbar {
    height: 40px;
    flex: none;
    display: flex;
    align-items: center;
    background: linear-gradient(to right, #7b92ab 0, #a6bfd9 75px, #a6bfd9 1185px, #7e93ab 1210px);
    border-top: 1px solid #2c3a4b;
}
.orb {
    width: 38px;
    height: 38px;
    margin: 0 14px 0 8px;
    display: flex;
    align-items: center;
    justify-content: center;
    border-radius: 50%;
    background: radial-gradient(circle at 50% 75%, #37c1e8 0, #0d6fa8 55%, #0b3b5f 100%);
    border: 1px solid #2c4c66;
}
.task {
    width: 61px;
    height: 39px;
    flex: none;
    display: flex;
    align-items: center;
    justify-content: center;
}
.task-ie {
    padding-right: 3px;
}
.task-folder {
    padding-left: 3px;
}
.task-media {
    padding-left: 6px;
}
.task-on {
    width: 60px;
    margin-right: 1px;
    background: linear-gradient(to bottom, #e4edf5, #c6d6e6);
    border: 1px solid #3c4b5c;
    border-radius: 2px;
}
.task-vbox {
    margin-left: 4px;
    background: linear-gradient(to bottom, #c3d4e6, #a9c1da);
}
.chrome-ico {
    width: 29px;
    height: 29px;
    display: flex;
    align-items: center;
    justify-content: center;
    border-radius: 50%;
    background: conic-gradient(#db4437 0 60deg, #f4c20d 60deg 180deg, #0f9d58 180deg 300deg, #db4437 300deg);
}
.chrome-blue {
    width: 14px;
    height: 14px;
    border-radius: 50%;
    background: #4285f4;
    border: 2px solid #fff;
}
.tray {
    margin-left: auto;
    display: flex;
    align-items: center;
    gap: 8px;
    height: 100%;
    color: #e8eef5;
}
.lang {
    margin-right: 6px;
    margin-top: -5px;
    font: 12px "Liberation Sans", sans-serif;
    letter-spacing: 1px;
    color: #e0e7ef;
}
.tray-up {
    width: 0;
    height: 0;
    border: 4px solid transparent;
    border-top: 0;
    border-bottom: 4px solid #e8eef5;
    margin-right: 4px;
}
.clock {
    width: 66px;
    margin-left: 6px;
    text-align: center;
    font: 11.3px/17px "Open Sans", sans-serif;
}
.clock div + div {
    margin-top: 1px;
}
.show-desktop {
    width: 14px;
    height: 39px;
    border: 1px solid #c5d0dc;
    background: linear-gradient(to bottom, #8d9bad, #56677c);
}
```
